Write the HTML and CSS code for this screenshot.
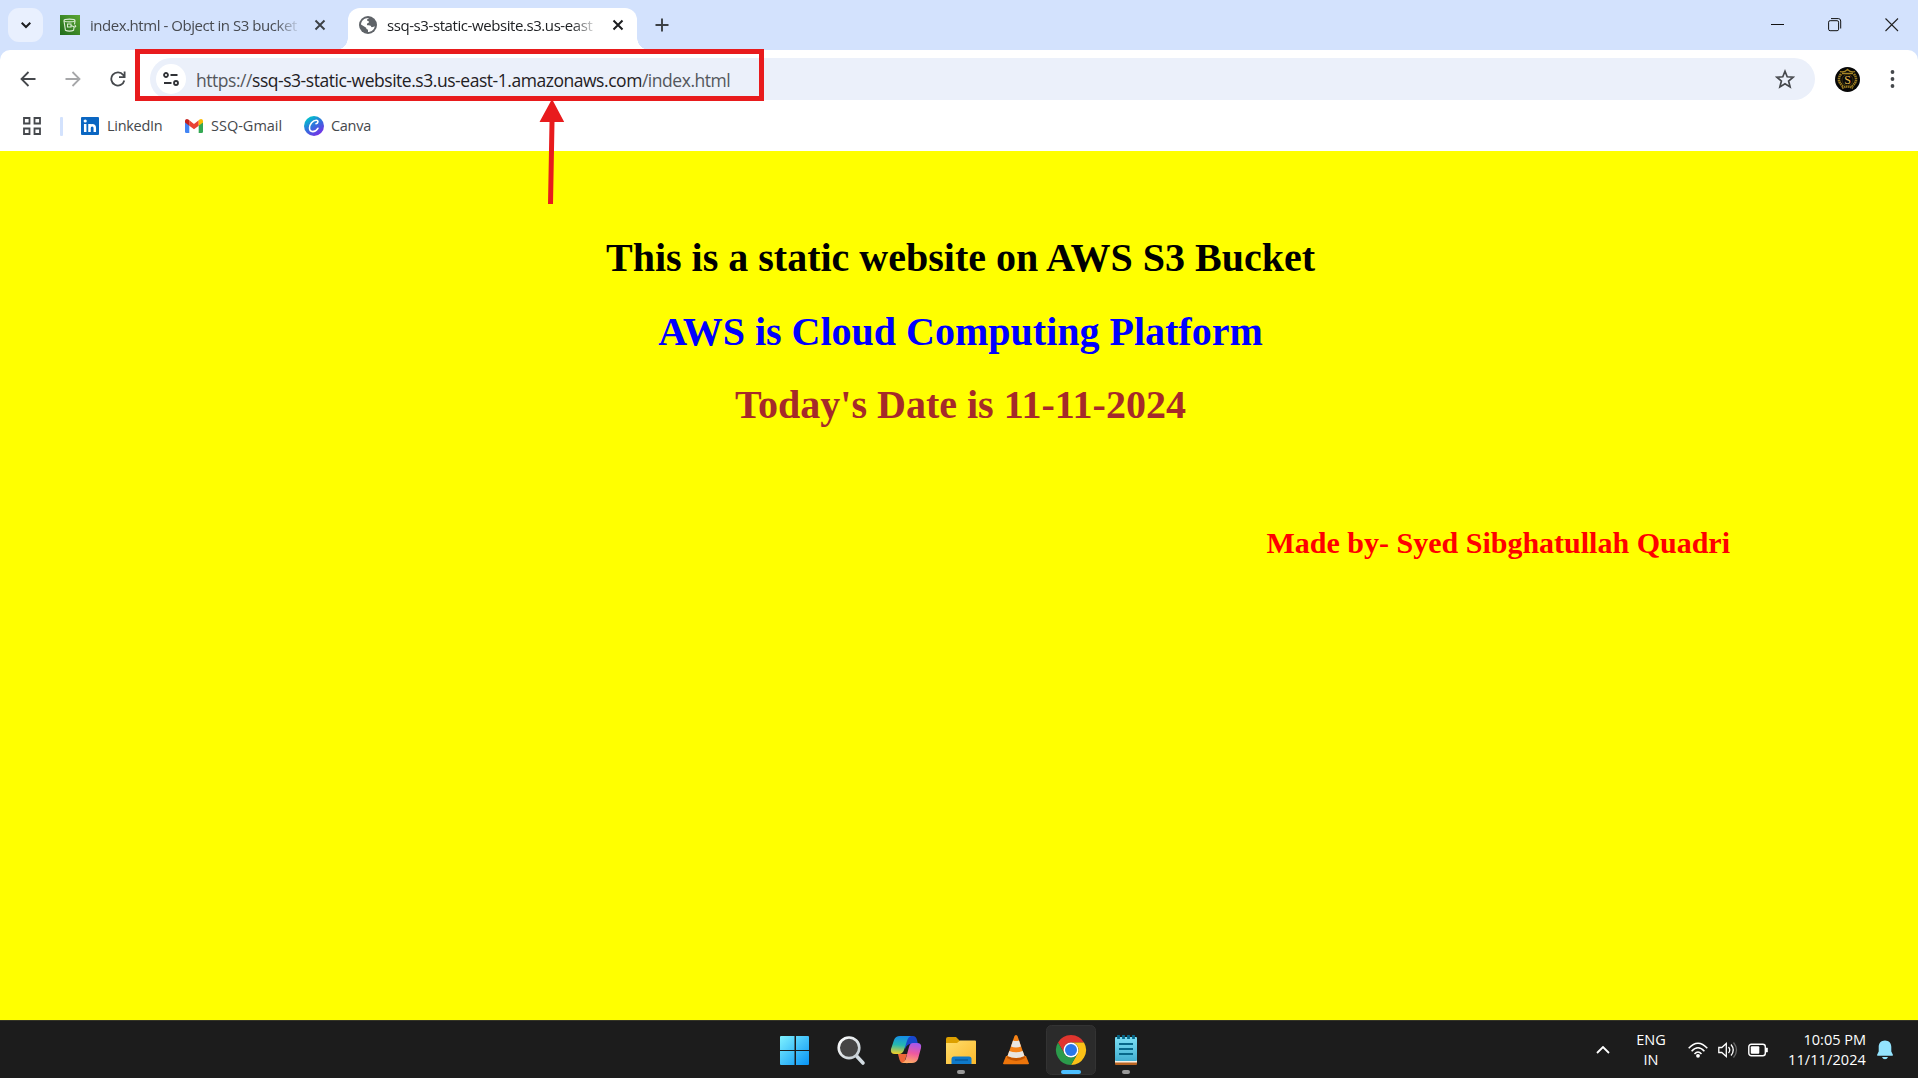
FILE: index.html
```html
<!DOCTYPE html>
<html lang="en">
<head>
<meta charset="utf-8">
<title>ssq-s3-static-website</title>
<link rel="stylesheet" href="styles.css">
</head>
<body>
<header class="browser">
  <div class="tabstrip">
    <button class="tab-search"><svg width="12" height="12" viewBox="0 0 12 12"><path d="M1.700 3.800 6 8l4.300-4.200" fill="none" stroke="#1c1d20" stroke-width="2"/></svg></button>
    <div class="tab">
      <svg width="20" height="20" viewBox="0 0 20 20"><defs><linearGradient id="s3" x2="1" y1="1"><stop stop-color="#1f6b1c"/><stop offset="1" stop-color="#5da733"/></linearGradient></defs><path fill="url(#s3)" d="M0 0h20v20H0z"/><g fill="none" stroke="#d9ecd2" stroke-width="1.100"><ellipse cx="9.500" cy="5.500" rx="5.500" ry="1.400"/><path d="m4 5.800 1.400 9.400c2 1.200 6.200 1.200 8.200 0l.5-3M15 5.800l-.5 3.500"/><path d="M7.500 9h3.500v3H7.500zM11 10.500l3.500 1.400c1.600.3 1.600-1 .2-1.700"/></g></svg>
      <span class="tab-title">index.html - Object in S3 bucket</span>
      <svg class="close" width="12" height="12" viewBox="0 0 12 12"><path d="m1.500 1.500 9 9m0-9-9 9" stroke="#3c4045" stroke-width="1.900"/></svg>
    </div>
    <div class="tab active">
      <svg width="18" height="18" viewBox="0 0 18 18"><circle cx="9" cy="9" r="9" fill="#5f6368"/><path fill="#fff" d="M10.200 2c-2 .8-2.400 1.800-2 2.600.5.800 1.800.4 1.800 1.400 0 1.300-2 .9-2.100 2.200 0 1 .5 1 1.700 1 2 .1 2.600.6 2.600 1.900 1.900.2 2.800-.5 3.600-.8C15.200 14 12 16 9 16.100v-2.500c-1.300 0-1.800-.8-1.800-1.800L2 8.500C2.300 4.600 5.500 1.600 10.200 2z"/></svg>
      <span class="tab-title">ssq-s3-static-website.s3.us-east</span>
      <svg class="close" width="12" height="12" viewBox="0 0 12 12"><path d="m1.500 1.500 9 9m0-9-9 9" stroke="#1c1d20" stroke-width="2"/></svg>
    </div>
    <svg class="new-tab" width="14" height="14" viewBox="0 0 14 14"><path d="M7 .5v13M.5 7h13" stroke="#3c4045" stroke-width="1.900"/></svg>
    <div class="window-controls">
      <svg width="14" height="14" viewBox="0 0 14 14"><path d="M0 6.500h13" stroke="#111"/></svg>
      <svg width="14" height="14" viewBox="0 0 14 14" fill="none" stroke="#111"><rect x=".6" y="2.700" width="10" height="10" rx="1.500"/><path d="M3 .6h7.500Q12.700.7 12.700 3v7.500"/></svg>
      <svg width="14" height="14" viewBox="0 0 14 14"><path d="m.5.500 12.500 12.500m0-12.500L.5 13" stroke="#222" stroke-width="1.100"/></svg>
    </div>
  </div>
  <div class="toolbar">
    <nav class="nav">
      <svg width="16" height="16" viewBox="0 0 16 16"><path d="M15.500 8H1.700m6.800-7L1.500 8l7 7" fill="none" stroke="#45484c" stroke-width="1.800"/></svg>
      <svg width="16" height="16" viewBox="0 0 16 16"><path d="M.5 8h13.800M7.500 1l7 7-7 7" fill="none" stroke="#a6a7a9" stroke-width="1.800"/></svg>
      <svg width="16" height="16" viewBox="0 0 16 16"><path d="M14.300 9.500A6.600 6.600 0 1 1 13.200 4L14.500 5.500M14.600.5v5.700H9" fill="none" stroke="#45484c" stroke-width="1.800"/></svg>
    </nav>
    <div class="omnibox">
      <span class="site-info"><svg width="16" height="14" viewBox="0 0 16 14"><g fill="none" stroke="#303236" stroke-width="1.800"><circle cx="3" cy="3" r="2"/><circle cx="13" cy="11" r="2"/><path d="M7.500 3h7M1 11h7.500"/></g></svg></span>
      <span class="url">https://<b>ssq-s3-static-website.s3.us-east-1.amazonaws.com</b>/index.html</span>
      <svg width="20" height="20" viewBox="0 0 20 20"><path d="m10 2.300 2.200 5.500 6 .4-4.600 3.800 1.500 5.900-5.100-3.200-5.100 3.200L6.400 12 1.800 8.200l6-.4z" fill="none" stroke="#45484c" stroke-width="1.700"/></svg>
    </div>
    <div class="avatar"><svg width="25" height="25" viewBox="0 0 25 25"><circle cx="12.500" cy="12.500" r="12.500" fill="#070707"/><path d="M5 4.500q4 1.500 7.500-2 3.500 3.500 7.500 2M7 6.500h11" fill="none" stroke="#a58524" stroke-width="1.300"/><path d="M6 7q-5 7 2 12m11-12q5 7-2 12M7 21q5.500-3 11 0" fill="none" stroke="#98791f" stroke-width="2.600" stroke-dasharray="1.500 .6"/><circle cx="12.500" cy="13" r="5.500" fill="#090909" stroke="#5d4a13" stroke-width=".6"/></svg><span>S</span></div>
    <svg class="kebab" width="5" height="20" viewBox="0 0 5 20" fill="#45484c"><circle cx="2.500" cy="3" r="1.900"/><circle cx="2.500" cy="10" r="1.900"/><circle cx="2.500" cy="17" r="1.900"/></svg>
  </div>
  <div class="bookmarks">
    <svg width="18" height="18" viewBox="0 0 18 18"><path d="M1 1h5.500v5.500H1zm10.500 0H17v5.500h-5.500zM1 11.500h5.500V17H1zm10.500 0H17V17h-5.500z" fill="none" stroke="#45484c" stroke-width="1.800"/></svg>
    <i class="divider"></i>
    <a class="bm linkedin"><svg width="18" height="18" viewBox="0 0 18 18"><rect width="18" height="18" rx="1" fill="#0a66c2"/><circle cx="4.200" cy="4" r="1.600" fill="#fff"/><path d="M4.200 7v8M8.500 7v8M8.500 11c0-3.700 5.300-3.700 5.300 0v4" fill="none" stroke="#fff" stroke-width="2.500"/></svg><span>LinkedIn</span></a>
    <a class="bm gmail"><svg width="18" height="14" viewBox="0 0 18 14"><path fill="#4285f4" d="M0 3v9.500Q0 14 1.300 14h3V5z"/><path fill="#34a853" d="M13.700 5v9h3q1.300 0 1.300-1.500V3z"/><path fill="#ea4335" d="M4.300 1.300 9 5l4.700-3.700v5.400L9 10.300 4.300 6.700z"/><path fill="#c5221f" d="M0 2.200C0 .2 2-.5 3.400.6l.9.7v5.400L0 3.500z"/><path fill="#fbbc04" d="m13.700 1.300.9-.7C16-.5 18 .2 18 2.200v1.300l-4.300 3.200z"/></svg><span>SSQ-Gmail</span></a>
    <a class="bm canva"><svg width="20" height="20" viewBox="0 0 20 20"><defs><linearGradient id="cv" x1=".1" x2=".75" y2="1"><stop offset=".1" stop-color="#00c4cc"/><stop offset=".5" stop-color="#2f72dd"/><stop offset="1" stop-color="#7d2ae8"/></linearGradient></defs><circle cx="10" cy="10" r="10" fill="url(#cv)"/><path d="M12 7.800c2.300-.2 2.700-3.600.3-3.600-3.700 0-6.800 4.200-6.800 7.900 0 4.700 5.800 4.500 8.400.2" fill="none" stroke="#fff" stroke-width="1.600" stroke-linecap="round"/></svg><span>Canva</span></a>
  </div>
</header>
<main class="page">
  <h1>This is a static website on AWS S3 Bucket</h1>
  <h1 class="blue">AWS is Cloud Computing Platform</h1>
  <h1 class="brown">Today's Date is 11-11-2024</h1>
  <h2>Made by- Syed Sibghatullah Quadri</h2>
</main>
<footer class="taskbar">
  <div class="apps">
    <svg viewBox="0 0 50 58"><defs><linearGradient id="wn" x2="1" y2="1"><stop stop-color="#7ff2ff"/><stop offset="1" stop-color="#0793f5"/></linearGradient></defs><path fill="url(#wn)" d="M10 16h13.500v14H9V17q0-1 1-1zm15 0h12q1 0 1 1v13H25zM9 31h14.500v14H10q-1 0-1-1zm16 0h13v13q0 1-1 1H25z"/></svg>
    <svg viewBox="0 0 50 58"><defs><linearGradient id="gl" x2="1" y2="1"><stop stop-color="#fff"/><stop offset="1" stop-color="#bfc9cf"/></linearGradient></defs><path d="m31 36.500 6 6.500" stroke="#d3dce2" stroke-width="3.600" stroke-linecap="round"/><circle cx="23" cy="27.800" r="10.300" fill="#454545" stroke="url(#gl)" stroke-width="2.600"/></svg>
    <svg viewBox="0 0 50 58"><defs><linearGradient id="c1" x1=".5" x2=".4" y2="1"><stop stop-color="#158de8"/><stop offset=".5" stop-color="#25b8b0"/><stop offset="1" stop-color="#f0cf29"/></linearGradient><linearGradient id="c2" x1=".6" x2=".4" y2="1"><stop stop-color="#a458ed"/><stop offset=".5" stop-color="#ee589f"/><stop offset="1" stop-color="#ffac65"/></linearGradient></defs><path fill="#1847cc" d="M23 16h9q3 0 4 4l1 4h-7q-4 0-6 5z"/><path fill="#ed6537" d="M17 34h9l-2 6q-1 4 3 3h-5q-3 0-4-5z"/><path fill="url(#c1)" d="M19 16h11q-3 1-4 5l-3 9q-1.500 4-5 4h-4q-5 0-4-5l3-9q1.500-4 6-4z"/><path fill="url(#c2)" d="M32 23h4q5 0 4 5l-3 11q-1.500 4-6 4H21q3-1 4-5l3-11q1-4 4-4z"/></svg>
    <svg viewBox="0 0 50 58"><defs><linearGradient id="fd" x2="1" y2="1"><stop stop-color="#ffdd6b"/><stop offset="1" stop-color="#fbb92c"/></linearGradient></defs><path fill="#dda000" d="M10 19q0-2 2-2h8l4 4v6H10z"/><path fill="url(#fd)" d="M10 23h11l3-2.500h15q1 0 1 1V44H10z"/><path fill="#0e79c9" d="M15.500 44v-5q0-2.500 2.500-2.500h15q2.500 0 2.500 2.500v5z"/><path d="M19 40h13" stroke="#064c86"/><rect x="21" y="50" width="8" height="4" rx="2" fill="#999"/></svg>
    <svg viewBox="0 0 50 58"><path fill="#ed750b" d="M15 36h20l3 7.500q0 .8-1 .8H13q-1 0-1-.8z"/><path fill="#c35500" d="M17 35h16l1 3q-9 6-18 0z"/><path fill="#f58216" d="M23.500 16q1.500-2 3 0l7 20q-8.500 4-17 0z"/><path fill="#e8e5e1" d="m22 20.500-2 6q5 2 10 0l-2-6q-3 1-6 0zM18.300 31l-1.800 5q8.500 4 17 0l-1.800-5q-6.700 2.500-13.400 0z"/></svg>
    <svg viewBox="0 0 50 58"><rect x=".5" y="5.500" width="49" height="49" rx="5" fill="#2b2b2b" stroke="#333"/><path fill="#df352e" d="M12 22.500a15 15 0 0 1 26 0H25a7.500 7.500 0 0 0-6.500 11z"/><path fill="#fbc116" d="M38 22.500A15 15 0 0 1 25 45l6.500-11.200A7.500 7.500 0 0 0 25 22.500z"/><path fill="#2b9b4b" d="M12 22.500A15 15 0 0 0 25 45l6.500-11.200A7.500 7.500 0 0 1 18.500 33.800z"/><circle cx="25" cy="30" r="7.500" fill="#fff"/><circle cx="25" cy="30" r="6" fill="#2877ea"/><rect x="15" y="50" width="20" height="4" rx="2" fill="#4cbfff"/></svg>
    <svg viewBox="0 0 50 58"><defs><linearGradient id="np" x2="0" y2="1"><stop stop-color="#7cdff5"/><stop offset="1" stop-color="#42afd1"/></linearGradient></defs><path fill="#b96422" d="M14 40h22v4q0 1-1 1H15q-1 0-1-1z"/><path fill="#f6eee2" d="M14 38h22v4.500H14z"/><rect x="14" y="17" width="22" height="24" rx="1" fill="url(#np)"/><path d="M18 24h14m-14 5h14m-14 5h14" stroke="#07688a" stroke-width="1.800"/><path d="M17.500 15v4m5-4v4m5-4v4m5-4v4" stroke="#08698b" stroke-width="2.800"/><rect x="21" y="50" width="8" height="4" rx="2" fill="#999"/></svg>
  </div>
  <div class="tray">
    <svg class="caret" width="14" height="8" viewBox="0 0 14 8"><path d="m1 7 6-6 6 6" fill="none" stroke="#fff" stroke-width="1.800"/></svg>
    <div class="lang"><span>ENG</span><span>IN</span></div>
    <div class="status">
      <svg width="20" height="18" viewBox="0 0 20 18"><g fill="none" stroke="#fff" stroke-width="1.500"><path d="M.7 7.300q9.300-10 18.600 0M3.600 10.300q6.400-7 12.800 0M6.500 13q3.500-4 7 0"/></g><circle cx="10" cy="14.800" r="1.900" fill="#fff"/></svg>
      <svg width="20" height="18" viewBox="0 0 20 18" fill="none" stroke="#fff" stroke-width="1.300"><path d="M.8 6.500h3l4.500-4v13l-4.500-4h-3z"/><path d="M10.500 6q2.500 3 0 6m2.500-8.500q4.500 5.500 0 11"/><path d="M15.500 1.500q6 7.500 0 15" stroke="#666"/></svg>
      <svg width="20" height="18" viewBox="0 0 20 18"><rect x=".8" y="3.200" width="16.500" height="11.600" rx="2.500" fill="none" stroke="#fff" stroke-width="1.400"/><rect x="2.800" y="5.200" width="8.500" height="7.600" rx="1" fill="#fff"/><path d="M18 7h1.500v4H18z" fill="#fff" stroke="#fff" stroke-width=".6"/></svg>
    </div>
    <div class="clock"><span>10:05 PM</span><span class="date">11/11/2024</span></div>
    <svg class="bell" width="16" height="20" viewBox="0 0 16 20" fill="#93e4ff"><path d="M8 .5c4 0 6.300 2.800 6.300 6.500v4.500L16 15q0 .8-.8.800H.8Q0 15.800 0 15l1.700-3.500V7C1.700 3.300 4 .5 8 .5zM5 17h6q-.8 2.300-3 2.300T5 17z"/></svg>
  </div>
</footer>
<div class="highlight"></div>
<svg class="arrow" width="26" height="106" viewBox="0 0 26 106" fill="#e81b1d"><path d="M13 0 25.200 23h-9.700L14 105H9l1.500-82H.5z"/></svg>
</body>
</html>
```
FILE: styles.css
```css
* { box-sizing: border-box; }
body {
  margin: 0;
  width: 1918px;
  height: 1078px;
  overflow: hidden;
  position: relative;
  display: flex;
  flex-direction: column;
  font-family: "Open Sans", "Noto Sans", sans-serif;
}
svg { display: block; flex: none; }
button { border: 0; padding: 0; }

.browser { background: #d3e2fd; height: 151px; flex: none; }
.tabstrip { display: flex; align-items: flex-start; height: 50px; padding: 8px 19px 0 8px; }
.tab-search {
  width: 35px; height: 34px; border-radius: 11px;
  background: #e9f0fe;
  display: grid; place-items: center;
}
.tab {
  display: flex; align-items: center;
  width: 277px; height: 34px; margin-left: 17px;
  color: #474a50;
}
.tab-title {
  width: 211px; margin-left: 10px;
  white-space: nowrap;
  font-size: 15px; line-height: 24px; letter-spacing: -0.42px;
  -webkit-mask-image: linear-gradient(90deg, #000 185px, transparent 211px);
  mask-image: linear-gradient(90deg, #000 185px, transparent 211px);
}
.tab:not(.active) .tab-title { letter-spacing: -0.46px; }
.close { margin-left: 13px; }
.tab.active {
  position: relative;
  width: 289px; height: 42px; margin-left: 11px;
  padding: 0 13px 8px 11px;
  background: #fff; border-radius: 12px 12px 0 0;
  color: #202225;
}
.active .close { margin-left: auto; }
.tab.active::before, .tab.active::after {
  content: ""; position: absolute; bottom: 0;
  width: 12px; height: 12px;
}
.tab.active::before { left: -12px; background: radial-gradient(circle at 0 0, transparent 11.5px, #fff 12px); }
.tab.active::after { right: -12px; background: radial-gradient(circle at 100% 0, transparent 11.5px, #fff 12px); }
.new-tab { margin: 10px 0 0 18px; }
.window-controls { display: flex; gap: 43px; margin: 10px 0 0 auto; }

.toolbar {
  display: flex; align-items: center;
  height: 58px; padding: 0 23px 0 20px;
  background: #fff; border-radius: 10px 10px 0 0;
}
.nav { display: flex; gap: 29px; }
.omnibox {
  display: flex; align-items: center;
  width: 1665px; height: 42px; margin-left: 24px;
  padding: 0 20px 0 6px;
  background: #ebf0fa; border-radius: 21px;
}
.site-info { width: 30px; height: 30px; border-radius: 50%; background: #fff; display: grid; place-items: center; }
.url { flex: 1; margin: 1px 0 0 10px; font-size: 17.5px; line-height: 28px; letter-spacing: -0.46px; color: #54575c; white-space: nowrap; }
.url b { font-weight: 400; color: #1f2023; }
.avatar { position: relative; margin-left: 20px; }
.avatar span { position: absolute; inset: 0; text-align: center; font: 12px/26px "Liberation Serif", serif; color: #e7b94c; }
.kebab { margin-left: auto; }

.bookmarks {
  display: flex; align-items: center;
  height: 43px; padding: 0 23px 7px;
  background: #fff;
  font-size: 14.5px; line-height: 22px; color: #45484c;
}
.divider { width: 3px; height: 19px; margin: 0 18px 0 19px; background: #d3e2fd; border-radius: 1px; }
.bm { display: flex; align-items: center; gap: 8px; white-space: nowrap; letter-spacing: -0.3px; }
.linkedin { width: 104px; }
.gmail { width: 119px; letter-spacing: 0; }
.canva { gap: 7px; }

.page {
  flex: 1; background: #ff0; overflow: hidden;
  padding: 84px 0 0 3px;
  font-family: "Liberation Serif", serif;
  text-align: center;
}
h1 { margin: 0 0 27px; font-size: 40px; line-height: 46px; }
.blue { margin-top: 28px; color: #00f; }
.brown { color: #a52a2a; }
h2 { margin: 98px 188px 0 0; text-align: right; color: #f00; font-size: 30px; line-height: 34px; }

.taskbar {
  display: flex; height: 58px; flex: none;
  background: #1c1c1c; color: #fff; border-top: 1px solid #343426;
}
.apps { display: flex; gap: 5px; margin-left: 771px; }
.apps svg { width: 50px; height: 58px; margin-top: -1px; }
.tray { display: flex; align-items: center; margin-left: 445px; font-size: 14.5px; line-height: 20px; }
.lang { display: flex; flex-direction: column; align-items: center; width: 30px; margin-left: 26px; }
.status { display: flex; gap: 10px; margin-left: 22px; }
.clock { display: flex; flex-direction: column; align-items: flex-end; width: 98px; white-space: nowrap; }
.date { letter-spacing: 0.1px; }
.bell { margin-left: 11px; }

.highlight { position: absolute; left: 135px; top: 49px; width: 629px; height: 52px; border: 5px solid #e81b1d; }
.arrow { position: absolute; left: 539px; top: 99px; }
```
